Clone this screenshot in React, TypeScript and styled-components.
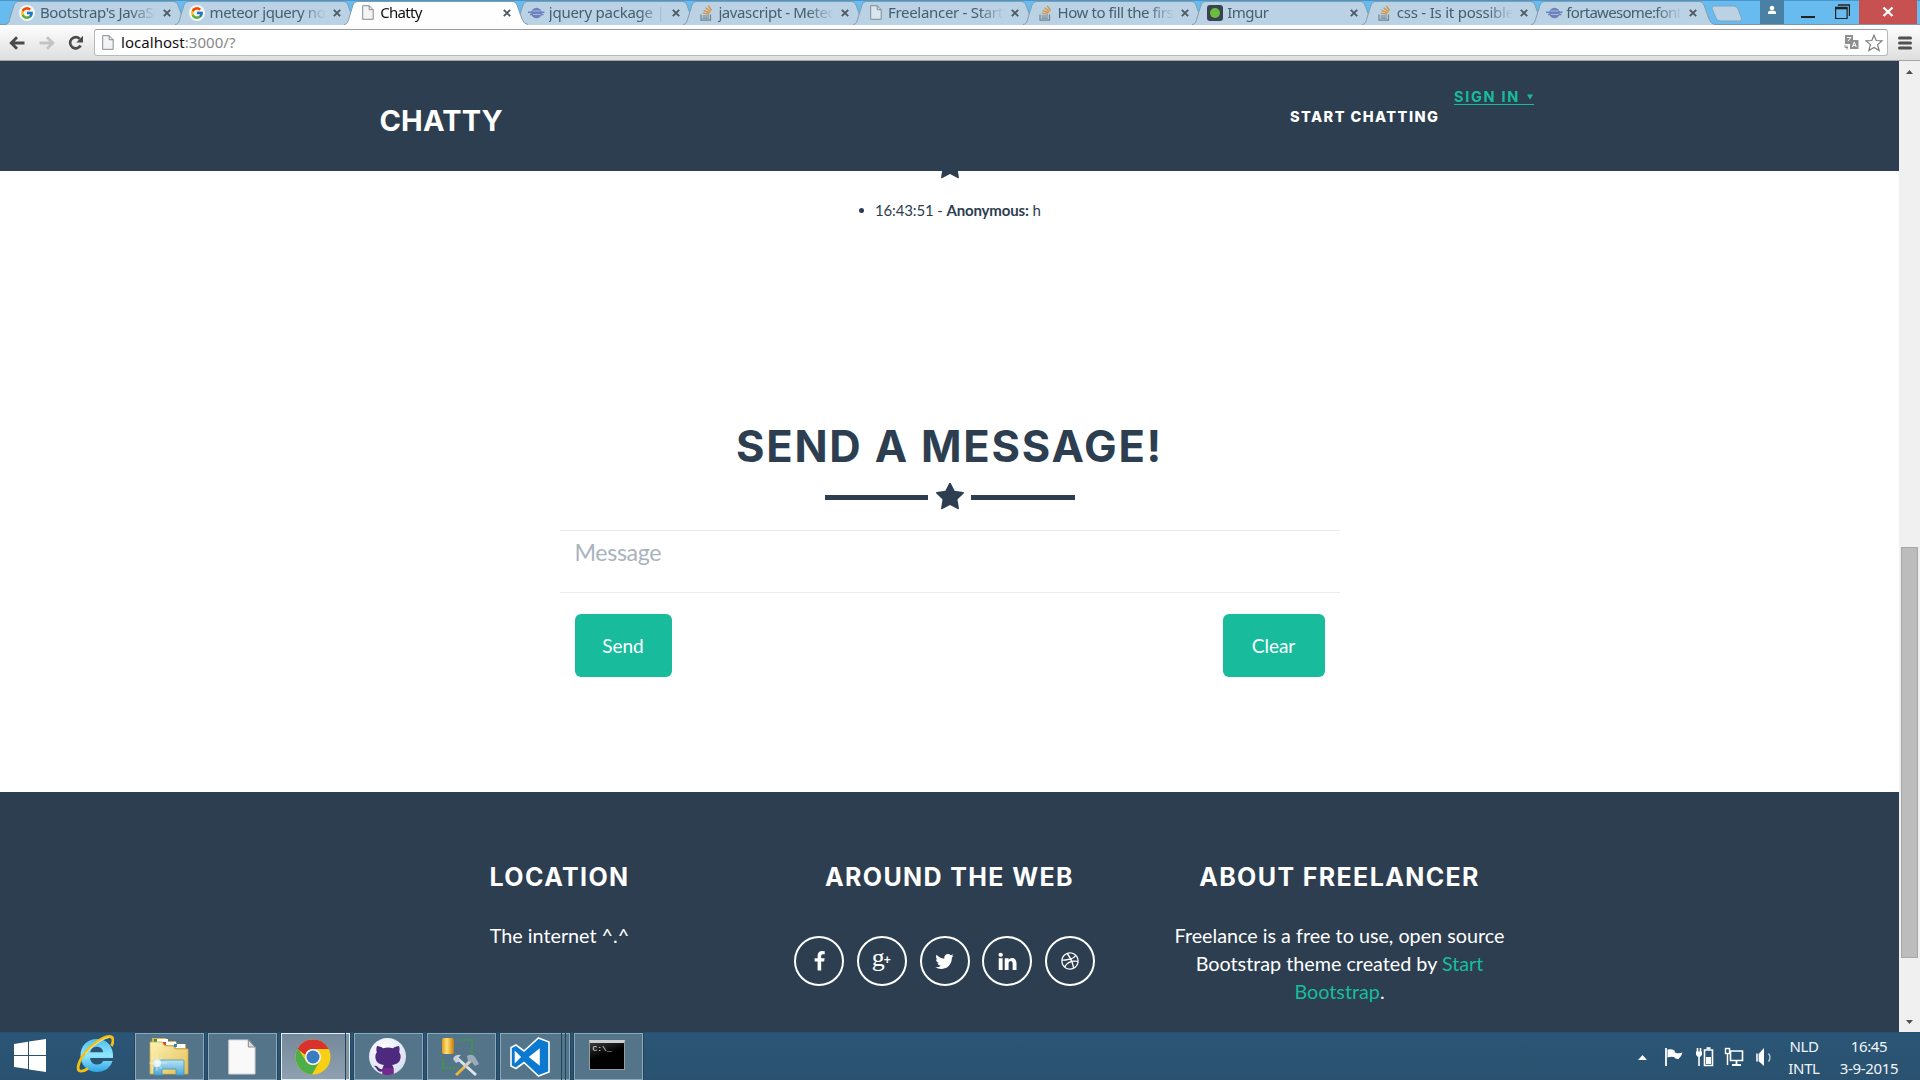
import React from "react";
import styled, { createGlobalStyle, css } from "styled-components";
import { FcGoogle } from "react-icons/fc";
import { FaDribbble } from "react-icons/fa";

const NAVY = "#2c3e50";
const TEAL = "#18bc9c";
const UI = `"Noto Sans", "Open Sans", sans-serif`;
const DISPLAY = `Inter, "Open Sans", sans-serif`;

const GlobalStyle = createGlobalStyle`
  * { box-sizing: border-box; }
  body { margin: 0; background: #fff; overflow: hidden; }
  svg { display: block; flex: none; }
`;

const Screen = styled.div`
  width: 1920px;
  height: 1080px;
  display: flex;
  flex-direction: column;
  overflow: hidden;
  font-family: Lato, sans-serif;
  color: ${NAVY};
`;

/* ---------- browser chrome ---------- */

const TabStrip = styled.div`
  display: flex;
  height: 25px;
  flex: none;
  background: #68bbef;
  padding-left: 5px;
  box-shadow: inset 0 1px #4b96cb, inset 0 -1px #7c98ad;
`;

const TabSlot = styled.div<{ $active?: boolean }>`
  display: grid;
  width: 169.6px;
  flex: none;
  height: 25px;
  z-index: ${(p) => (p.$active ? 2 : 1)};
  > * { grid-area: 1 / 1; }
`;

const TabContent = styled.div<{ $active?: boolean }>`
  display: flex;
  align-items: center;
  height: 25px;
  padding-left: ${(p) => (p.$active ? 16 : 15)}px;
  z-index: 1;
`;

const FaviconSlot = styled.div`
  width: 16px;
  margin-right: 4px;
  display: flex;
  justify-content: center;
`;

const TabTitle = styled.div<{ $active?: boolean; $ls: number }>`
  width: 115px;
  height: 24px;
  margin-top: -2px;
  overflow: hidden;
  white-space: nowrap;
  font: 15px/24px ${UI};
  letter-spacing: ${(p) => p.$ls}px;
  color: ${(p) => (p.$active ? "#111" : "#45606f")};
  mask-image: linear-gradient(to right, #000 90px, transparent 116px);
`;

const TabClose = styled.svg`
  margin-left: 8px;
`;

const NewTab = styled.svg`
  margin: 5px 0 0 10px;
`;

const Spacer = styled.div`
  flex: 1;
`;

const WindowButton = styled.div<{ $w: number; $bg?: string; $shift?: number }>`
  width: ${(p) => p.$w}px;
  height: 24px;
  padding-right: ${(p) => p.$shift || 0}px;
  background: ${(p) => p.$bg || "transparent"};
  display: flex;
  justify-content: center;
`;

const Toolbar = styled.div`
  display: flex;
  align-items: center;
  height: 36px;
  flex: none;
  background: linear-gradient(#fefefe, #dedede);
  border-bottom: 1px solid #a5a5a5;
  padding: 0 8px 0 9px;
`;

const NavIcons = styled.div`
  display: flex;
  width: 85px;
  gap: 13.5px;
  align-items: center;
`;

const Omnibox = styled.div`
  display: flex;
  align-items: center;
  width: 1794px;
  height: 27px;
  background: #fff;
  border: 1px solid #b9b9b9;
  border-top-color: #9c9c9c;
  border-radius: 3px;
  padding: 0 4px 0 7px;
`;

const Url = styled.div`
  margin: -2px 0 0 7px;
  font: 15px/24px ${UI};
  letter-spacing: 0.04px;
  color: #111;
  span { color: #888; }
`;

/* ---------- page ---------- */

const Viewport = styled.div`
  display: flex;
  height: 971px;
  flex: none;
`;

const Page = styled.div`
  width: 1899px;
  background: #fff;
  overflow: hidden;
`;

const Navbar = styled.nav`
  height: 110px;
  background: ${NAVY};
  display: flex;
  align-items: flex-start;
  padding-left: 379.5px;
`;

const Brand = styled.div`
  width: 910.5px;
  margin-top: 50px;
  font: 700 29px/20px ${DISPLAY};
  letter-spacing: 0.15px;
  color: #fff;
`;

const NavLink = styled.a`
  margin-top: 46px;
  width: 164px;
  font: 800 14.5px/20px ${DISPLAY};
  letter-spacing: 1.45px;
  color: #fff;
  white-space: nowrap;
`;

const SignIn = styled.a`
  margin-top: 28px;
  width: 80px;
  height: 16px;
  display: flex;
  align-items: center;
  justify-content: space-between;
  border-bottom: 1px solid ${TEAL};
  font: 700 14.5px/16px ${DISPLAY};
  letter-spacing: 1.7px;
  color: ${TEAL};
  white-space: nowrap;
`;

const HiddenStar = styled.div`
  height: 9px;
  overflow: hidden;
  display: flex;
  justify-content: center;
  align-items: flex-end;
`;

const Messages = styled.ul`
  margin: 20px 0 0;
  padding: 0;
  height: 201px;
  list-style: none;
  display: flex;
  justify-content: center;
`;

const Message = styled.li`
  display: flex;
  align-items: center;
  height: 20px;
  width: 181px;
  font-size: 15px;
  line-height: 20px;
  white-space: pre;
  letter-spacing: -0.14px;
  &::before {
    content: "";
    flex: none;
    width: 5px;
    height: 5px;
    border-radius: 50%;
    background: ${NAVY};
    margin-right: 11px;
  }
  b { font-weight: 700; }
`;

const Heading = styled.h2`
  margin: 20px 0 0;
  text-align: center;
  font: 700 43.5px/50px ${DISPLAY};
  letter-spacing: 1.8px;
  color: ${NAVY};
`;

const Divider = styled.div`
  display: flex;
  justify-content: center;
  align-items: center;
  gap: 7.5px;
  height: 30px;
  margin-top: 11px;
`;

const Rule = styled.div`
  width: 103.5px;
  height: 5px;
  background: ${NAVY};
`;

const Form = styled.div`
  width: 780px;
  margin: 18px auto 0;
`;

const Field = styled.div`
  height: 63px;
  border-top: 1px solid #ebebeb;
  border-bottom: 1px solid #ebebeb;
  padding: 5px 15px 0;
  font-size: 23.2px;
  letter-spacing: -0.35px;
  line-height: 32px;
  color: #a9b3bc;
`;

const Actions = styled.div`
  display: flex;
  justify-content: space-between;
  padding: 21px 15px 0;
`;

const Button = styled.button<{ $w: number }>`
  width: ${(p) => p.$w}px;
  height: 63px;
  border: 0;
  padding: 0;
  border-radius: 6px;
  background: ${TEAL};
  color: #fff;
  font: 19px/24px Lato, sans-serif;
`;

const Footer = styled.footer`
  margin-top: 115px;
  height: 240px;
  background: ${NAVY};
  color: #fff;
  display: flex;
  justify-content: center;
  padding-top: 73px;
`;

const Column = styled.div`
  width: 390px;
  display: flex;
  flex-direction: column;
  align-items: center;
`;

const ColumnTitle = styled.h3`
  margin: 0;
  font: 700 25px/24px ${DISPLAY};
  letter-spacing: 1.37px;
  white-space: nowrap;
`;

const ColumnText = styled.p`
  margin: 33px 0 0;
  width: 340px;
  text-align: center;
  font-size: 19.75px;
  line-height: 28px;
  a { color: ${TEAL}; }
`;

const Socials = styled.div`
  display: flex;
  gap: 12.7px;
  margin-top: 47px;
  margin-right: 10px;
`;

const Social = styled.a`
  width: 50px;
  height: 50px;
  border: 2px solid #fff;
  border-radius: 50%;
  display: flex;
  align-items: center;
  justify-content: center;
`;

const GPlus = styled.span`
  font: 26px/20px "Liberation Serif", serif;
  margin: -7px 0 0 -1px;
  display: flex;
  align-items: center;
  small { font: 700 12px/10px "Liberation Sans", sans-serif; margin: 5px 0 0 -1px; }
`;

const Scrollbar = styled.div`
  width: 21px;
  background: #f0f0f0;
  display: flex;
  flex-direction: column;
  align-items: center;
  justify-content: space-between;
  padding: 9px 0 8px;
`;

const Thumb = styled.div`
  width: 17px;
  height: 411px;
  margin-top: 410px;
  background: #bcbcbc;
  border: 1px solid #a8a8a8;
`;

/* ---------- taskbar ---------- */

const Taskbar = styled.div`
  height: 48px;
  flex: none;
  background: linear-gradient(#24506f 0, #2b5576 2px, #2a5270);
  display: flex;
  color: #f1f6f9;
`;

const Launcher = styled.div<{ $w: number; $pad: number; $left: number }>`
  width: ${(p) => p.$w}px;
  padding: ${(p) => p.$pad}px 0 0 ${(p) => p.$left}px;
`;

const taskFrame = css`
  height: 47px;
  margin-top: 1px;
  border: 1px solid #8fa8b9;
  box-shadow: 0 0 0 1px #23455d;
`;

const Task = styled.div<{ $w?: number; $active?: boolean }>`
  ${taskFrame}
  width: ${(p) => p.$w || 69}px;
  margin-right: 4px;
  padding-right: 2px;
  display: flex;
  align-items: center;
  justify-content: center;
  background: ${(p) => (p.$active ? "linear-gradient(#74899b, #8fa1b0)" : "#54748a")};
  border-color: ${(p) => (p.$active ? "#e6edf1" : "#8fa8b9")};
`;

const Stack = styled.div<{ $active?: boolean; $w: number }>`
  ${taskFrame}
  width: ${(p) => p.$w}px;
  margin-left: -4px;
  margin-right: 4px;
  border-left: 0;
  background: ${(p) => (p.$active ? "#8295a5" : "#54748a")};
  border-color: ${(p) => (p.$active ? "#e6edf1" : "#8fa8b9")};
`;

const Tray = styled.div`
  display: flex;
  align-items: center;
  padding: 0 20px 0 0;
  > svg { margin-top: 2px; }
`;

const TrayText = styled.div<{ $w: number; $ml: number }>`
  width: ${(p) => p.$w}px;
  margin-left: ${(p) => p.$ml}px;
  margin-top: 1px;
  text-align: center;
  font: 15px/22px ${UI};
  letter-spacing: -0.35px;
  white-space: nowrap;
`;

/* ---------- icons ---------- */

const PageIcon = ({ fill = "#f4f4f4" }: { fill?: string }) => (
  <svg width="12" height="15" viewBox="0 0 12 15">
    <path d="M.7.7h6.500l4 4v9.600H.7z" fill={fill} stroke="#848c92" />
    <path d="M7.200.7v4h4" fill="none" stroke="#848c92" />
  </svg>
);

const PlanetIcon = () => (
  <svg width="17" height="12" viewBox="0 0 17 12">
    <circle cx="8.500" cy="6" r="5.300" fill="#6d82bd" />
    <path d="M4.500 4h8M3.600 7.500h9.600" stroke="#a9bbdc" strokeWidth="1" />
    <path d="M0 5.200h4M12.500 5.200h4M2 7.600h3M12.500 7.600h3" stroke="#6d82bd" strokeWidth="1.500" />
  </svg>
);

const StackIcon = () => (
  <svg width="13" height="16" viewBox="0 0 13 16">
    <path d="M1 9.500v5.700h9.500V9.500" fill="none" stroke="#71818b" strokeWidth="1.200" />
    <path d="M2.600 13.200h6.300M2.600 11h6.300" stroke="#71818b" strokeWidth="1.200" />
    <path d="M2.800 8.200l6.300 1M3.600 5.300l6 2.500M5.600 2.700l5 4M8.300 .9l3.300 4.600" stroke="#d8913f" strokeWidth="1.300" />
  </svg>
);

const ImgurIcon = () => (
  <svg width="16" height="16" viewBox="0 0 16 16">
    <rect width="16" height="16" rx="3" fill="#35444f" />
    <circle cx="8" cy="8" r="5" fill="#6cbd3f" />
  </svg>
);

const FaviconDisc = styled.div`
  width: 16px;
  height: 16px;
  margin-left: -2px;
  border-radius: 50%;
  background: #f1f6fa;
  display: flex;
  align-items: center;
  justify-content: center;
`;

const icons: Record<string, React.ReactNode> = {
  google: (
    <FaviconDisc>
      <FcGoogle size={14} />
    </FaviconDisc>
  ),
  page: <PageIcon fill="#d8e6f0" />,
  active: <PageIcon />,
  planet: <PlanetIcon />,
  stack: <StackIcon />,
  imgur: <ImgurIcon />,
};

const StarIcon = ({ size }: { size: number }) => (
  <svg width={size} height={size} viewBox="64 64 1664 1664">
    <path
      fill={NAVY}
      d="M1728 647q0 22-26 48l-363 354 86 500q1 7 1 20 0 21-10.500 35.500t-30.500 14.500q-19 0-40-12l-449-236-449 236q-22 12-40 12-21 0-31.500-14.500t-10.500-35.500q0-6 2-20l86-500-364-354q-25-27-25-48 0-37 56-46l502-73 225-455q19-41 49-41t49 41l225 455 502 73q56 9 56 46z"
    />
  </svg>
);

const Glyph = ({ d }: { d: string }) => (
  <svg width="21" height="21" viewBox="0 0 1792 1792">
    <path fill="#fff" d={d} />
  </svg>
);

const FACEBOOK =
  "M1343 12v264h-157q-86 0-116 36t-30 108v189h293l-39 296h-254v759h-306v-759h-255v-296h255v-218q0-186 104-288.500t277-102.500q147 0 228 12z";
const TWITTER =
  "M1684 408q-67 98-162 167 1 14 1 42 0 130-38 259.500t-115.500 248.500-184.500 210.500-258 146-323 54.500q-271 0-496-145 35 4 78 4 225 0 401-138-105-2-188-64.500t-114-159.500q33 5 61 5 43 0 85-11-112-23-185.500-111.500t-73.500-205.500v-4q68 38 146 41-66-44-105-115t-39-154q0-88 44-163 121 149 294.500 238.500t371.500 99.500q-8-38-8-74 0-134 94.500-228.500t228.500-94.500q140 0 236 102 109-21 205-78-37 115-142 178 93-10 186-50z";
const LINKEDIN =
  "M477 625v991h-330v-991h330zm21-306q1 73-50.500 122t-135.500 49h-2q-82 0-132-49t-50-122q0-74 51.500-122.500t134.500-48.500 133 48.500 51 122.500zm1166 729v568h-329v-530q0-105-40.500-164.500t-126.500-59.500q-63 0-105.500 34.500t-63.500 85.500q-11 30-11 81v553h-329q2-399 2-647t-1-296l-1-48h329v144h-2q20-32 41-56t56.500-52 87-43.500 114.500-15.500q171 0 275 113.500t104 332.500z";

const FlippableSvg = styled.svg<{ $flip?: boolean }>`
  transform: ${(p) => (p.$flip ? "scaleX(-1)" : "none")};
`;

const Arrow = ({ color, flip }: { color: string; flip?: boolean }) => (
  <FlippableSvg width="16" height="14" viewBox="0 0 16 14" $flip={flip}>
    <path d="M15.500 7H3M8 1.200L2.200 7 8 12.800" fill="none" stroke={color} strokeWidth="2.800" />
  </FlippableSvg>
);

const ReloadIcon = () => (
  <svg width="16" height="16" viewBox="0 0 16 16">
    <path d="M12.600 10.500a5.600 5.600 0 1 1-.8-6.600" fill="none" stroke="#4a4a4a" strokeWidth="2.600" />
    <path d="M15 .8v6.700H8.300z" fill="#4a4a4a" />
  </svg>
);

const StarButton = styled.svg`
  margin-left: 6px;
`;

const WindowsLogo = () => (
  <svg width="32" height="33" viewBox="0 0 32 33">
    <path fill="#fff" d="M0 5l14-2.200V16H0zM15 2.600L32 0v16H15zM0 17h14v13L0 28zM15 17h17v16l-17-2.500z" />
  </svg>
);

const IELogo = () => (
  <svg width="38" height="38" viewBox="0 0 38 38">
    <defs>
      <linearGradient id="ie" x1="0" y1="0" x2="0" y2="1">
        <stop offset="0" stopColor="#4fc0ef" />
        <stop offset=".5" stopColor="#8fe6ff" />
        <stop offset="1" stopColor="#2fa5e4" />
      </linearGradient>
    </defs>
    <path
      fill="url(#ie)"
      d="M21 4C11 4 4.500 11 4.500 20.500S11.500 37 21 37c7.500 0 13.300-4 15.500-11h-9.300c-1.200 2.400-3.300 3.500-6 3.500-4.200 0-6.800-2.500-7-6.500H37C38 11.500 31 4 21 4zm-6.700 13.300c.5-3.400 3-5.500 6.500-5.500s6 2.100 6.400 5.500z"
    />
    <path
      d="M35.500 11C38 6 37.500 1.500 33.500 1.500 27.500 1.500 16 9 8.500 18.500 2 27 .5 35 4 36c2 .6 5-.5 8-2.500"
      fill="none"
      stroke="#f2bf13"
      strokeWidth="2.800"
    />
    <path d="M33 2.500C27 3.500 16 10.500 9.500 19" fill="none" stroke="#fff0a0" strokeWidth=".9" />
  </svg>
);

const FolderIcon = () => (
  <svg width="40" height="39" viewBox="0 0 40 39">
    <defs>
      <linearGradient id="fold" x1="0" y1="0" x2="1" y2="1">
        <stop offset="0" stopColor="#fdf3b5" />
        <stop offset="1" stopColor="#e3be55" />
      </linearGradient>
      <linearGradient id="lib" x1="0" y1="0" x2="0" y2="1">
        <stop offset="0" stopColor="#b9e4f2" />
        <stop offset="1" stopColor="#4ba5d6" />
      </linearGradient>
    </defs>
    <path d="M3 1h14l1 3h9l1 3h9v10H2z" fill="#d9b44e" />
    <path d="M8 2h11v3H8zM16 5h11v3H16zM27 7h9v4h-9z" fill="#fff" />
    <path d="M5 2h3v3H5z" fill="#2b9d48" />
    <path d="M14 5h3v3h-3z" fill="#d9402e" />
    <path d="M25 7h3v3h-3z" fill="#2787c8" />
    <path d="M1 5h12l3 4h8l2 3h13v25H1z" fill="url(#fold)" stroke="#cfa846" strokeWidth=".8" />
    <path d="M5 38V24q0-1 1-1h28q1 0 1 1v14h-8v-6H13v6z" fill="url(#lib)" stroke="#3d98c9" strokeWidth=".8" />
    <circle cx="8" cy="26" r="4" fill="#fff" opacity=".7" />
    <path d="M8 18v16M0 26h18M3 20l10 12M13 20L3 32" stroke="#fff" strokeWidth=".6" opacity=".8" />
  </svg>
);

const BlankDocument = () => (
  <svg width="28" height="36" viewBox="0 0 28 36">
    <path d="M.8 1h19.500L27 8v27H.8z" fill="#f9f9f9" stroke="#d5d5d5" />
    <path d="M20.300 1v7H27z" fill="#ddd" stroke="#8a8a8a" />
  </svg>
);

const ChromeLogo = () => (
  <svg width="36" height="36" viewBox="0 0 36 36">
    <circle cx="18" cy="18" r="17.500" fill="#f9cf14" />
    <path d="M2.500 10A17.500 17.500 0 0 1 33.600 10H18a8 8 0 0 0-7.700 6z" fill="#d9322c" />
    <path d="M2.800 9.300A17.500 17.500 0 0 0 17 35.500L24.800 22A8 8 0 0 1 11 22z" fill="#4caf48" />
    <circle cx="18" cy="18" r="8" fill="#f4f4f4" />
    <circle cx="18" cy="18" r="6.500" fill="#3a7cc4" />
  </svg>
);

const GitHubDisc = styled.div`
  width: 37px;
  height: 37px;
  border-radius: 50%;
  background: radial-gradient(circle at 40% 30%, #fff, #cfd6ea);
  display: flex;
  justify-content: center;
  align-items: flex-end;
  overflow: hidden;
`;

const OctocatIcon = () => (
  <svg width="30" height="31" viewBox="0 0 30 31">
    <path
      d="M4 2c2 0 4.500 1 6 2.200 3-.8 7-.8 10 0C21.500 3 24 2 26 2c.8 2 .8 4.500.2 6.200C28 10.500 28 13.500 27 16c-1.200 3.300-4.500 4.600-8 5 1 1 1.500 2 1.500 4v6h-11v-3.500c-3 .6-4.700-.5-5.700-2.500C3 23.500 2 22.500 1 22c1.500-.8 3.500.2 4.500 1.800C6.500 25 8 25.500 9.600 25c.2-1.800.6-3 1.400-4-3.500-.4-6.800-1.700-8-5-1-2.500-1-5.500.8-7.800C3.200 6.500 3.200 4 4 2z"
      fill="#4d2a7d"
    />
    <path d="M9.500 24h11v7h-11z" fill="#75298c" />
  </svg>
);

const DatabaseTools = () => (
  <svg width="40" height="40" viewBox="0 0 40 40">
    <defs>
      <linearGradient id="cyl">
        <stop offset="0" stopColor="#e59a12" />
        <stop offset=".4" stopColor="#ffe27a" />
        <stop offset="1" stopColor="#c77d06" />
      </linearGradient>
    </defs>
    <rect x="1" y="1" width="12" height="16" rx="2" fill="url(#cyl)" />
    <path d="M19 3h12v14M2 22v9h14" fill="none" stroke="#3f9b37" strokeWidth="2.200" strokeDasharray="2.200 1.600" />
    <path d="M35 38L16 21" stroke="#dce4ea" strokeWidth="3" />
    <path d="M15 38L32 22" stroke="#e8b63a" strokeWidth="3" />
    <path d="M23 30l7-7" stroke="#c9d2da" strokeWidth="2.500" />
    <path d="M12 22q2-5 8-4l-3 3 2 3-4 2z" fill="#c5d0da" />
    <path d="M26 19q5-3 8 1l4 7-4 2-3-4-4-1z" fill="#9aacbb" />
  </svg>
);

const VisualStudioLogo = () => (
  <svg width="40" height="40" viewBox="0 0 40 40">
    <path
      fillRule="evenodd"
      d="M28.500 1L39 5v30l-10.500 4L14 25.500 6 31.500 1 29V10.500L6 8l8 6zM29 13v14l-9-7zM5.500 15.500v9l4.500-4.500z"
      fill="#0b79cf"
      stroke="#fff"
      strokeWidth="1.600"
    />
    <path d="M29 13v14l-9-7zM5.500 15.500v9l4.500-4.500z" fill="#fff" />
  </svg>
);

const TerminalBox = styled.div`
  width: 36px;
  height: 30px;
  border: 1px solid #9b9b9b;
  border-top: 3px solid #cfcfcf;
  background: linear-gradient(160deg, #3b3b3b, #000 45%);
  color: #eee;
  font: 8px/11px "Liberation Mono", monospace;
  padding-left: 3px;
  margin: -3px 2px 0 0;
`;

const tabs = [
  { icon: "google", title: "Bootstrap's JavaScript", ls: -0.4 },
  { icon: "google", title: "meteor jquery not", ls: -0.42 },
  { icon: "active", title: "Chatty", active: true, ls: -0.7 },
  { icon: "planet", title: "jquery package | At", ls: -0.25 },
  { icon: "stack", title: "javascript - Meteor", ls: -0.4 },
  { icon: "page", title: "Freelancer - Start B", ls: -0.3 },
  { icon: "stack", title: "How to fill the first", ls: -0.42 },
  { icon: "imgur", title: "Imgur", ls: -0.5 },
  { icon: "stack", title: "css - Is it possible t", ls: -0.22 },
  { icon: "planet", title: "fortawesome:fonta", ls: -0.7 },
];

const TabShape = ({ active }: { active?: boolean }) => (
  <svg width="184" height="25" viewBox="0 0 184 25">
    <path
      d="M0 25C4 24 4 21 5 18L9 5Q10 2 13 2H169Q172 2 173 5L178 19Q180 24 184 25z"
      fill={active ? "#fefefe" : "#bad2e4"}
    />
    <path
      d="M0 24.500C4 24 4 21 5 18L9 5Q10 1.500 13 1.500H169Q172 1.500 173 5L178 19Q180 24 184 24.500"
      fill="none"
      stroke="#7f9db3"
    />
  </svg>
);

const FlagIcon = styled.svg`
  margin-left: 17px;
`;

const TrayIcon = styled.svg<{ $ml: number }>`
  margin-left: ${(p) => p.$ml}px;
`;

export default function App() {
  return (
    <Screen>
      <GlobalStyle />
      <TabStrip>
        {tabs.map((t, i) => (
          <TabSlot key={i} $active={t.active}>
            <TabShape active={t.active} />
            <TabContent $active={t.active}>
              <FaviconSlot>{icons[t.icon]}</FaviconSlot>
              <TabTitle $active={t.active} $ls={t.ls}>
                {t.title}
              </TabTitle>
              <TabClose width="8" height="8" viewBox="0 0 8 8">
                <path d="M.8.8l6.400 6.400M7.200.8L.8 7.200" stroke="#4c5a64" strokeWidth="1.900" />
              </TabClose>
            </TabContent>
          </TabSlot>
        ))}
        <NewTab width="32" height="17" viewBox="0 0 32 17">
          <path d="M3 1h20q3 0 4 3l3.500 9q1 3-2 3H9q-3 0-4-3L1 3.500Q.5 1 3 1z" fill="#bad2e4" stroke="#7fa3be" />
        </NewTab>
        <Spacer />
        <WindowButton $w={24} $bg="#4a80a4">
          <svg width="10" height="16" viewBox="0 0 10 16">
            <circle cx="5" cy="8" r="2.300" fill="#fff" />
            <path d="M1 14v-1.500q0-2 4-2t4 2V14z" fill="#fff" />
          </svg>
        </WindowButton>
        <WindowButton $w={48}>
          <svg width="14" height="20" viewBox="0 0 14 20">
            <path d="M0 17h14" stroke="#222" strokeWidth="2" />
          </svg>
        </WindowButton>
        <WindowButton $w={27} $shift={6}>
          <svg width="15" height="20" viewBox="0 0 15 20">
            <path d="M3 5h11.500v11" fill="none" stroke="#222" strokeWidth="1.400" />
            <path d="M.6 8h11.500v10.500H.6z" fill="none" stroke="#222" strokeWidth="1.200" />
            <path d="M0 8h12.600" stroke="#222" strokeWidth="2.600" />
          </svg>
        </WindowButton>
        <WindowButton $w={58} $bg="#c75050" $shift={1}>
          <svg width="12" height="20" viewBox="0 0 12 20">
            <path d="M1.500 7.500l9 8.500M10.500 7.500l-9 8.500" stroke="#fff" strokeWidth="2.400" />
          </svg>
        </WindowButton>
        <WindowButton $w={3} />
      </TabStrip>
      <Toolbar>
        <NavIcons>
          <Arrow color="#4a4a4a" />
          <Arrow color="#c4c4c4" flip />
          <ReloadIcon />
        </NavIcons>
        <Omnibox>
          <PageIcon />
          <Url>
            localhost<span>:3000/?</span>
          </Url>
          <Spacer />
          <svg width="15" height="15" viewBox="0 0 15 15">
            <path d="M1 0h8v5H6v4H1z" fill="#8f8f8f" />
            <rect x="6" y="5" width="8.500" height="9" fill="#8f8f8f" />
            <path d="M8.300 12l2-5 2 5M9 10.500h2.600M3 2.500h4L4 6" stroke="#fff" fill="none" />
            <path d="M1 10v2.500h3M3 14.500v-4" stroke="#8f8f8f" fill="none" />
          </svg>
          <StarButton width="18" height="18" viewBox="0 0 18 18">
            <path
              d="M9 1.200l2.200 5.300 5.800.4-4.400 3.700 1.500 5.900L9 13.400l-5.100 3.100 1.500-5.900L1 6.900l5.800-.4z"
              fill="#fff"
              stroke="#7b7b7b"
              strokeWidth="1.200"
            />
          </StarButton>
        </Omnibox>
        <Spacer />
        <svg width="14" height="14" viewBox="0 0 14 14">
          <path d="M1.500 2h11M1.500 7h11M1.500 12h11" stroke="#505050" strokeWidth="3" strokeLinecap="round" />
        </svg>
      </Toolbar>
      <Viewport>
        <Page>
          <Navbar>
            <Brand>CHATTY</Brand>
            <NavLink>START CHATTING</NavLink>
            <SignIn>
              SIGN IN
              <svg width="8" height="6" viewBox="0 0 8 6">
                <path d="M1 .5h6L4 5.500z" fill={TEAL} />
              </svg>
            </SignIn>
          </Navbar>
          <HiddenStar>
            <StarIcon size={28} />
          </HiddenStar>
          <Messages>
            <Message>
              <span>
                16:43:51 - <b>Anonymous:</b> h
              </span>
            </Message>
          </Messages>
          <Heading>SEND A MESSAGE!</Heading>
          <Divider>
            <Rule />
            <StarIcon size={28} />
            <Rule />
          </Divider>
          <Form>
            <Field>Message</Field>
            <Actions>
              <Button $w={97}>Send</Button>
              <Button $w={102}>Clear</Button>
            </Actions>
          </Form>
          <Footer>
            <Column>
              <ColumnTitle>LOCATION</ColumnTitle>
              <ColumnText>The internet ^.^</ColumnText>
            </Column>
            <Column>
              <ColumnTitle>AROUND THE WEB</ColumnTitle>
              <Socials>
                <Social>
                  <Glyph d={FACEBOOK} />
                </Social>
                <Social>
                  <GPlus>
                    g<small>+</small>
                  </GPlus>
                </Social>
                <Social>
                  <Glyph d={TWITTER} />
                </Social>
                <Social>
                  <Glyph d={LINKEDIN} />
                </Social>
                <Social>
                  <FaDribbble size={18} color="#fff" />
                </Social>
              </Socials>
            </Column>
            <Column>
              <ColumnTitle>ABOUT FREELANCER</ColumnTitle>
              <ColumnText>
                Freelance is a free to use, open source Bootstrap theme created by <a>Start Bootstrap</a>.
              </ColumnText>
            </Column>
          </Footer>
        </Page>
        <Scrollbar>
          <svg width="7" height="4" viewBox="0 0 7 4">
            <path d="M0 4l3.500-4L7 4z" fill="#505050" />
          </svg>
          <Thumb />
          <svg width="7" height="4" viewBox="0 0 7 4">
            <path d="M0 0h7L3.500 4z" fill="#505050" />
          </svg>
        </Scrollbar>
      </Viewport>
      <Taskbar>
        <Launcher $w={63} $pad={7} $left={14}>
          <WindowsLogo />
        </Launcher>
        <Launcher $w={72} $pad={3} $left={13}>
          <IELogo />
        </Launcher>
        <Task>
          <FolderIcon />
        </Task>
        <Task>
          <BlankDocument />
        </Task>
        <Task $w={65} $active>
          <ChromeLogo />
        </Task>
        <Stack $active $w={4} />
        <Task>
          <GitHubDisc>
            <OctocatIcon />
          </GitHubDisc>
        </Task>
        <Task>
          <DatabaseTools />
        </Task>
        <Task $w={62}>
          <VisualStudioLogo />
        </Task>
        <Stack $w={4} />
        <Stack $w={4} />
        <Task>
          <TerminalBox>C:\_</TerminalBox>
        </Task>
        <Spacer />
        <Tray>
          <svg width="9" height="5" viewBox="0 0 9 5">
            <path d="M0 5l4.500-5L9 5z" fill="#fff" />
          </svg>
          <FlagIcon width="20" height="20" viewBox="0 0 20 20">
            <path d="M2 1v18" stroke="#fff" strokeWidth="1.800" />
            <path d="M3.500 2.500q4-1 7 1 0 2 1.500 2.500 3 .8 6.500-.5-1 4-4 6.500-3 .5-4.500-2-3.500-.8-6.500.5z" fill="#fff" />
          </FlagIcon>
          <TrayIcon $ml={11} width="20" height="20" viewBox="0 0 20 20">
            <path d="M2.500 1v4M5.500 1v4M4 9v10" stroke="#fff" strokeWidth="1.600" />
            <path d="M1 4.500h6v3q-1 2.500-3 2.500T1 7.500z" fill="#fff" />
            <path d="M9.500 3h8v15.500h-8z" fill="none" stroke="#fff" strokeWidth="1.600" />
            <path d="M11.500 1.200h4" stroke="#fff" strokeWidth="2" />
            <path d="M11 10h5v7h-5z" fill="#fff" />
          </TrayIcon>
          <TrayIcon $ml={9} width="20" height="20" viewBox="0 0 20 20">
            <path d="M6.500 4h12v9.500h-12z" fill="none" stroke="#fff" strokeWidth="1.600" />
            <path d="M12.500 14v3M8 18h9" stroke="#fff" strokeWidth="1.800" />
            <rect x="1.500" y="1.500" width="4" height="5" fill="#2a5270" stroke="#fff" strokeWidth="1.400" />
            <path d="M3.500 7v11" stroke="#fff" strokeWidth="1.500" />
          </TrayIcon>
          <TrayIcon $ml={11} width="18" height="20" viewBox="0 0 18 20">
            <path d="M1 6.500h2.500v8H1z" fill="#cfd8de" />
            <path d="M4 6.500L9 1v18l-5-4.500z" fill="#fff" />
            <path d="M13.500 6.500q3 4 0 8" fill="none" stroke="#b9ccd8" strokeWidth="1.400" />
          </TrayIcon>
          <TrayText $w={32} $ml={15}>
            NLD
            <br />
            INTL
          </TrayText>
          <TrayText $w={62} $ml={18}>
            16:45
            <br />
            3-9-2015
          </TrayText>
        </Tray>
      </Taskbar>
    </Screen>
  );
}
